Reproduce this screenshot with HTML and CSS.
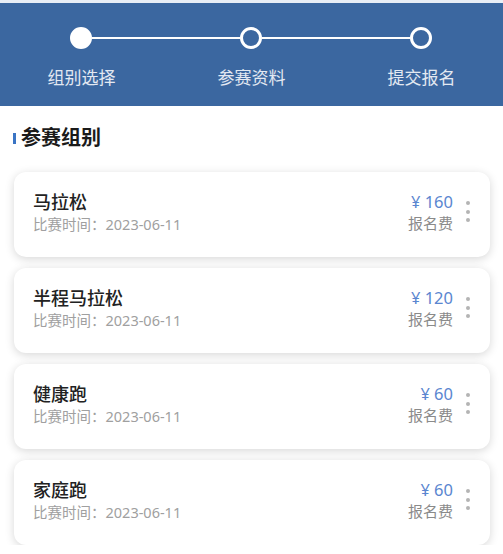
FILE: index.html
```html
<!DOCTYPE html>
<html lang="zh-CN">
<head>
    <meta charset="UTF-8">
    <meta name="viewport" content="width=device-width, initial-scale=1.0">
    <title>参赛组别</title>
    <link rel="stylesheet" href="styles.css">
</head>
<body>
    <header class="stepper">
        <div class="track">
            <span class="dot done"></span>
            <span class="line"></span>
            <span class="dot"></span>
            <span class="line"></span>
            <span class="dot"></span>
        </div>
        <div class="labels">
            <span>组别选择</span>
            <span>参赛资料</span>
            <span>提交报名</span>
        </div>
    </header>

    <h2 class="section-title">参赛组别</h2>

    <div class="group-list">
        <div class="group-card">
            <div class="info">
                <div class="name">马拉松</div>
                <div class="date">比赛时间：2023-06-11</div>
            </div>
            <div class="fee">
                <div class="price">¥ 160</div>
                <div class="fee-label">报名费</div>
            </div>
            <div class="more"><i></i><i></i><i></i></div>
        </div>
        <div class="group-card">
            <div class="info">
                <div class="name">半程马拉松</div>
                <div class="date">比赛时间：2023-06-11</div>
            </div>
            <div class="fee">
                <div class="price">¥ 120</div>
                <div class="fee-label">报名费</div>
            </div>
            <div class="more"><i></i><i></i><i></i></div>
        </div>
        <div class="group-card">
            <div class="info">
                <div class="name">健康跑</div>
                <div class="date">比赛时间：2023-06-11</div>
            </div>
            <div class="fee">
                <div class="price">¥ 60</div>
                <div class="fee-label">报名费</div>
            </div>
            <div class="more"><i></i><i></i><i></i></div>
        </div>
        <div class="group-card">
            <div class="info">
                <div class="name">家庭跑</div>
                <div class="date">比赛时间：2023-06-11</div>
            </div>
            <div class="fee">
                <div class="price">¥ 60</div>
                <div class="fee-label">报名费</div>
            </div>
            <div class="more"><i></i><i></i><i></i></div>
        </div>
    </div>
</body>
</html>
```

FILE: styles.css
```css
body {
    margin: 0;
    font-family: "Noto Sans", "Noto Sans CJK SC", sans-serif;
    background: #fff;
    color: #222;
}
.stepper {
    background: #3b67a0;
    border-top: 3px solid #e8eef6;
    padding: 24px 0 16px;
}
.track {
    display: flex;
    align-items: center;
    width: 362px;
    margin-left: 70px;
}
.dot {
    width: 16px;
    height: 16px;
    border: 3px solid #fff;
    border-radius: 50%;
    flex: none;
}
.dot.done {
    background: #fff;
}
.line {
    flex: 1;
    height: 2px;
    background: #fff;
}
.labels {
    display: grid;
    grid-template-columns: repeat(3, 170px);
    justify-content: center;
    margin-top: 17px;
}
.labels span {
    text-align: center;
    font-size: 17px;
    line-height: 24px;
    color: #e3e9f2;
}
.section-title {
    margin: 18px 0 20px;
    padding-left: 13px;
    display: flex;
    align-items: center;
    font-size: 20px;
    line-height: 28px;
    font-weight: bold;
    color: #1a1a1a;
}
.section-title::before {
    content: "";
    width: 3px;
    height: 11px;
    background: #3a74c4;
    margin-right: 5px;
}
.group-list {
    display: flex;
    flex-direction: column;
    gap: 11px;
    padding: 0 13px 0 14px;
}
.group-card {
    height: 85px;
    box-sizing: border-box;
    display: flex;
    align-items: flex-start;
    padding: 18px 20px 0 19px;
    background: #fff;
    border-radius: 12px;
    box-shadow: 0 2px 10px rgba(0, 0, 0, 0.16);
}
.info {
    flex: 1;
}
.name {
    font-size: 18px;
    line-height: 24px;
    font-weight: 500;
    color: #222;
}
.date {
    font-size: 14.5px;
    line-height: 20px;
    color: #a0a0a0;
}
.fee {
    text-align: right;
}
.price {
    font-size: 16.5px;
    line-height: 24px;
    color: #5a86d0;
}
.fee-label {
    font-size: 15px;
    line-height: 18px;
    color: #8a8a8a;
}
.more {
    display: flex;
    flex-direction: column;
    gap: 4.5px;
    margin: 11px 0 0 13px;
}
.more i {
    width: 4px;
    height: 4px;
    border-radius: 50%;
    background: #b4b4b4;
}
```
